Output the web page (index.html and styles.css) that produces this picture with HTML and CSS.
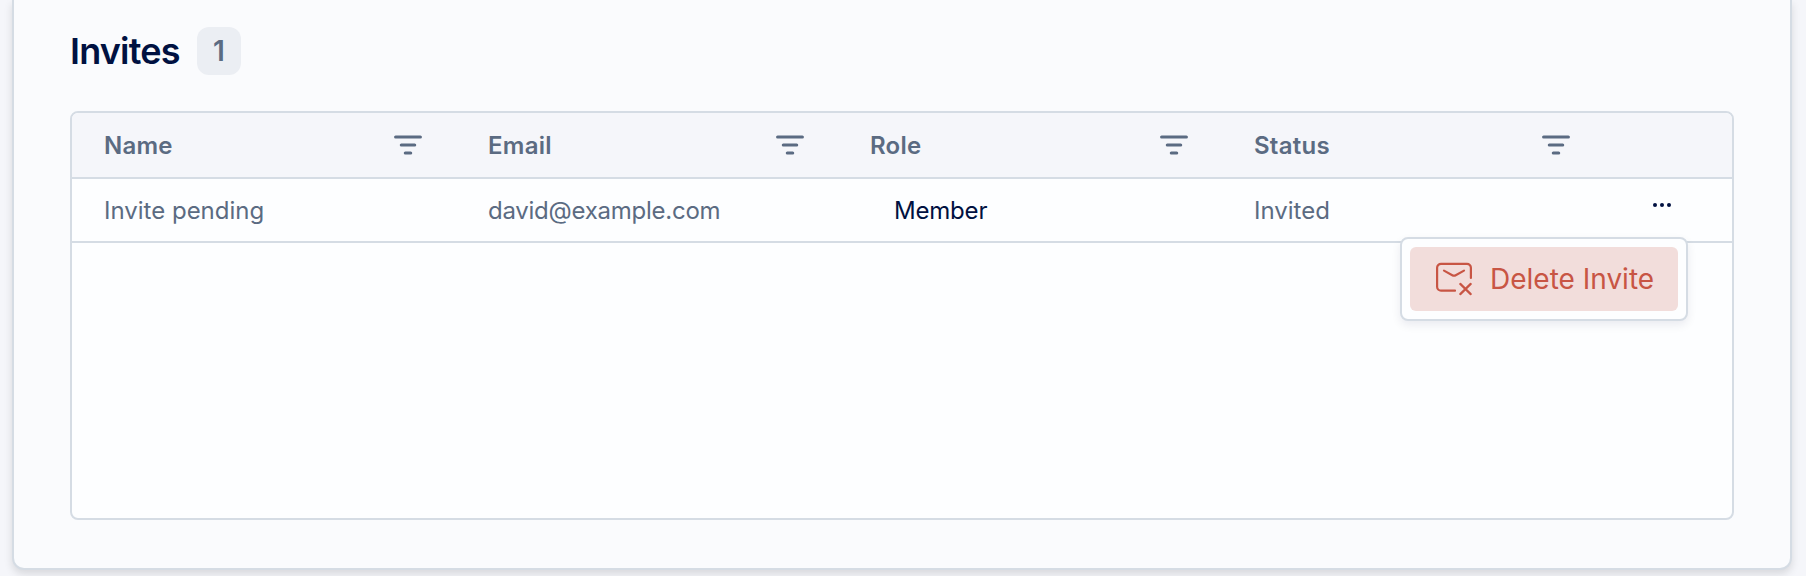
FILE: index.html
```html
<!DOCTYPE html>
<html lang="en">
<head>
    <meta charset="UTF-8">
    <meta name="viewport" content="width=device-width, initial-scale=1.0">
    <title>Invites</title>
    <link rel="stylesheet" href="styles.css">
</head>
<body>

<svg class="sprite" aria-hidden="true">
    <symbol id="icon-filter" viewBox="0 0 28 20">
        <path d="M1.600 2H26.400M7.300 10H20.700M11.300 18H16.700"/>
    </symbol>
</svg>

<main class="panel">
    <header class="panel-header">
        <h2>Invites</h2>
        <span class="count">1</span>
    </header>

    <div class="table">
        <div class="row head">
            <div class="cell"><span>Name</span><svg class="filter"><use href="#icon-filter"/></svg></div>
            <div class="cell"><span>Email</span><svg class="filter"><use href="#icon-filter"/></svg></div>
            <div class="cell"><span>Role</span><svg class="filter"><use href="#icon-filter"/></svg></div>
            <div class="cell"><span>Status</span><svg class="filter"><use href="#icon-filter"/></svg></div>
            <div class="cell"></div>
        </div>
        <div class="row">
            <div class="cell">Invite pending</div>
            <div class="cell email">david@example.com</div>
            <div class="cell role">Member</div>
            <div class="cell">Invited</div>
            <div class="cell actions">
                <button class="more" aria-label="More">
                    <svg width="18" height="4" viewBox="0 0 18 4"><circle cx="2" cy="2" r="2"/><circle cx="9" cy="2" r="2"/><circle cx="16" cy="2" r="2"/></svg>
                </button>
                <div class="menu">
                    <button class="menu-item">
                        <svg class="mail" width="36" height="34" viewBox="0 0 36 34">
                            <path d="M19 28.700H5a3.900 3.900 0 0 1-3.900-3.900V5.700a3.900 3.900 0 0 1 3.900-3.900H31a3.900 3.900 0 0 1 3.900 3.900V16"/>
                            <path d="M8 8.600L16.300 13.200Q18 14.100 19.700 13.200L28 8.600"/>
                            <path d="M24.300 21.900L34.700 32.100M34.700 21.900L24.300 32.100"/>
                        </svg>
                        <span>Delete Invite</span>
                    </button>
                </div>
            </div>
        </div>
    </div>
</main>

</body>
</html>
```
FILE: styles.css
```css
* { box-sizing: border-box; }
body { margin: 0; height: 576px; overflow: hidden; padding: 0 14px 6px 12px; background-color: #f5f6fa; color: #5b6b82; font-family: Inter, sans-serif; font-size: 24px; }
button { border: none; background: none; padding: 0; font: inherit; cursor: pointer; }
.sprite { display: none; }
.panel { height: 570px; padding: 27px 56px 48px; background-color: #fafbfd; border: 2px solid #d5dce4; border-top: none; border-radius: 0 0 12px 12px; box-shadow: 0 4px 8px rgba(0, 0, 0, 0.12); }
.panel-header { display: flex; align-items: center; gap: 16px; height: 48px; margin-bottom: 36px; }
h2 { width: 111px; margin: 0; color: #001141; font-size: 36px; font-weight: 600; letter-spacing: -0.8px; white-space: nowrap; }
.count { display: flex; align-items: center; justify-content: center; width: 44px; height: 48px; border-radius: 12px; background-color: #ebeef3; font-size: 28px; font-weight: 600; }
.table { height: 409px; border: 2px solid #d5dce4; border-radius: 8px; background-color: #fdfeff; }
.row { display: grid; grid-template-columns: 384px 382px 384px 382px 1fr; height: 64px; border-bottom: 2px solid #d5dce4; }
.row.head { height: 66px; background-color: #f5f6fa; border-radius: 6px 6px 0 0; font-weight: 600; letter-spacing: 0.25px; }
.cell { display: flex; align-items: center; padding: 0 34px 0 32px; }
.head .cell { justify-content: space-between; }
.cell.email { letter-spacing: -0.25px; }
.cell.role { padding-left: 56px; color: #001141; letter-spacing: -0.2px; }
.filter { width: 28px; height: 20px; fill: none; stroke: #5b6b82; stroke-width: 3.100; stroke-linecap: round; }
.actions { position: relative; justify-content: flex-end; padding: 0 61px 10px 0; }
.more { display: flex; fill: #001141; }
.menu { position: absolute; top: 58px; right: 44px; width: 288px; height: 84px; padding: 8px; border: 2px solid #d5dce4; border-radius: 8px; background-color: #fdfeff; box-shadow: 0 4px 10px rgba(0, 17, 65, 0.08); }
.menu-item { display: flex; align-items: center; gap: 18px; width: 268px; height: 64px; padding-left: 26px; border-radius: 6px; background-color: #f2dddb; color: #c85544; font-size: 28px; white-space: nowrap; }
.mail { fill: none; stroke: #c85544; stroke-width: 2.200; stroke-linecap: round; }
```
